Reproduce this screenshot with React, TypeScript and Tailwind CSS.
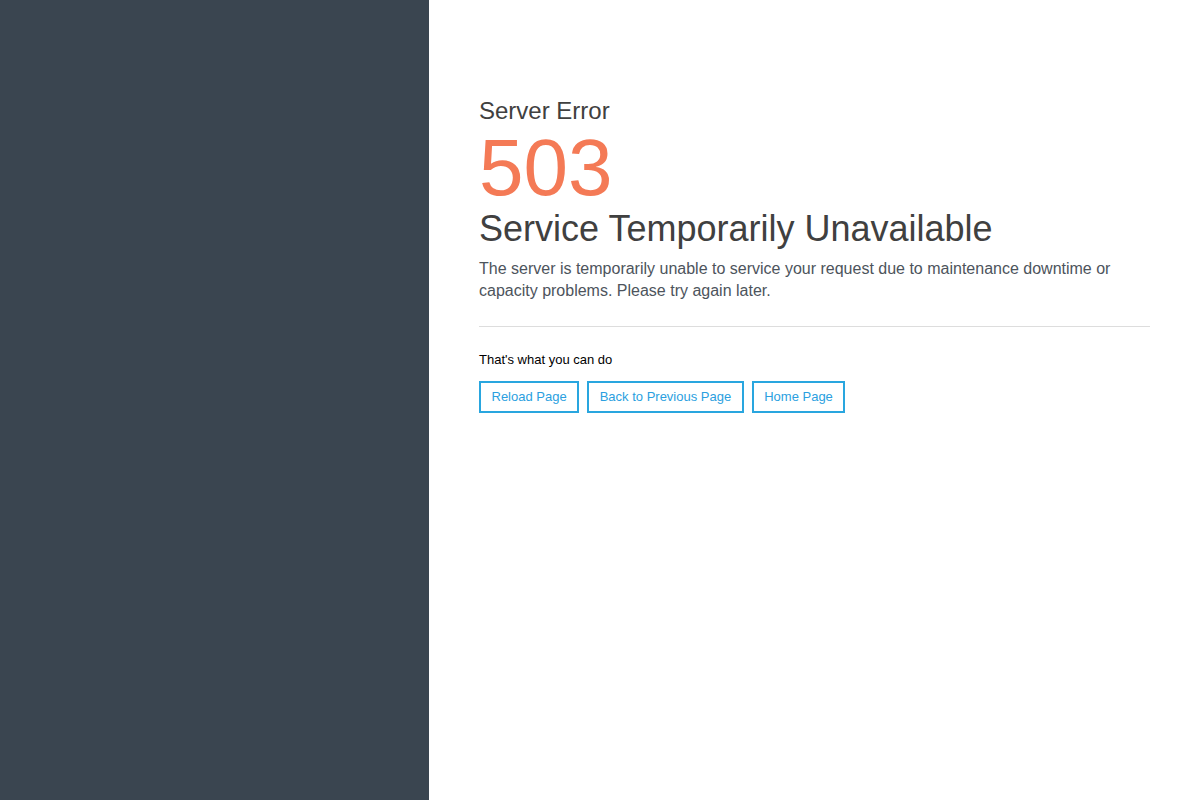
export default function App() {
    return (
        <div className="flex h-[800px] w-full bg-white" style={{ fontFamily: '"Liberation Sans", Arial, sans-serif' }}>
            <div className="w-[429px] shrink-0 bg-[#3a4550]" />
            <div className="flex-1 px-[50px] pt-[96px]">
                <h2 className="text-[24px] leading-[30px] text-[#404040]">Server Error</h2>
                <h1 className="mt-[2px] text-[80px] leading-[80px] text-[#f47a56]">503</h1>
                <h3 className="text-[36px] leading-[42px] text-[#404040]">Service Temporarily Unavailable</h3>
                <p className="mt-[8px] text-[16px] leading-[22px] text-[#4d545c]">
                    The server is temporarily unable to service your request due to maintenance downtime or capacity problems. Please try again later.
                </p>
                <hr className="mt-[24px] border-t border-[#dddddd]" />
                <p className="mt-[24px] text-[13px] leading-[18px] text-black">That's what you can do</p>
                <div className="mt-[12px] flex gap-[8px]">
                    <button className="h-[32px] border-2 border-[#29a6df] px-[10.5px] text-[13px] text-[#2b9fe0]">Reload Page</button>
                    <button className="h-[32px] border-2 border-[#29a6df] px-[10.5px] text-[13px] text-[#2b9fe0]">Back to Previous Page</button>
                    <button className="h-[32px] border-2 border-[#29a6df] px-[10.5px] text-[13px] text-[#2b9fe0]">Home Page</button>
                </div>
            </div>
        </div>
    );
}
